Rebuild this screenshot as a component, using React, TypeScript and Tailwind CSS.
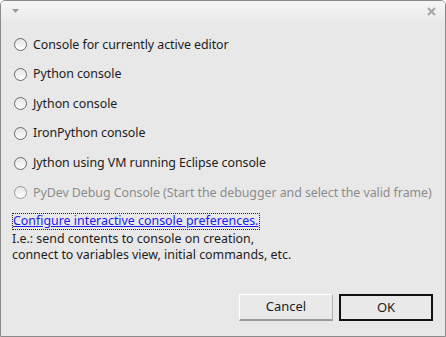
import { useState } from "react";

const options = [
  { label: "Console for currently active editor", disabled: false },
  { label: "Python console", disabled: false },
  { label: "Jython console", disabled: false },
  { label: "IronPython console", disabled: false },
  { label: "Jython using VM running Eclipse console", disabled: false },
  { label: "PyDev Debug Console (Start the debugger and select the valid frame)", disabled: true },
];

function Radio({ disabled }: { disabled: boolean }) {
  return (
    <span
      className={
        "inline-block shrink-0 w-[13px] h-[13px] rounded-full border bg-gradient-to-b from-[#e4e4e4] to-white " +
        (disabled ? "border-[#9a9a9a]" : "border-[#6a6a6a]")
      }
    />
  );
}

export default function App() {
  const [selected, setSelected] = useState<number | null>(null);

  return (
    <div className="w-[446px] h-[337px] flex flex-col bg-[#e8e8e8] border border-[#8a8a8a] rounded-t-[5px] overflow-hidden text-[12.4px] text-[#1c1c1c] font-['Noto_Sans',sans-serif]">
      {/* Title bar */}
      <div className="h-[21px] shrink-0 flex items-center justify-between pl-[11px] pr-[9px] bg-gradient-to-b from-[#f5f5f5] to-[#ebebeb]">
        <svg width="7" height="5" viewBox="0 0 7 5">
          <path d="M0 0 H7 L3.5 4 Z" fill="#9a9a9a" />
        </svg>
        <svg width="9" height="9" viewBox="0 0 9 9">
          <path d="M1 1 L8 8 M8 1 L1 8" stroke="#a8a8a8" strokeWidth="2.2" />
        </svg>
      </div>

      <div className="flex-1 flex flex-col pl-[11px] pt-[8px]">
        {options.map((o, i) => (
          <div
            key={o.label}
            onClick={() => !o.disabled && setSelected(i)}
            className={"h-[29.6px] pl-[2px] flex items-center gap-[6px] whitespace-nowrap " + (o.disabled ? "text-[#8c8c8c]" : "")}
          >
            <Radio disabled={o.disabled} />
            <span className={"leading-none tracking-[-0.05px] " + (selected === i ? "" : "")}>{o.label}</span>
          </div>
        ))}

        <div className="mt-[5px] flex">
          <a className="h-[17px] flex items-center pr-[1px] border border-dotted border-[#222] text-[#1b1bf0] underline leading-none">
            Configure interactive console preferences.
          </a>
        </div>
        <p className="leading-[16px] mt-[1px]">
          I.e.: send contents to console on creation,
          <br />
          connect to variables view, initial commands, etc.
        </p>

        <div className="mt-auto mb-[15px] mr-[12px] flex justify-end gap-[6px] text-[13px]">
          <button className="w-[94px] h-[27px] bg-[#e9e9e9] border-t border-l border-white border-b-2 border-r border-b-[#9a9a9a] border-r-[#b0b0b0]">
            Cancel
          </button>
          <button className="w-[94px] h-[27px] bg-[#e9e9e9] border-2 border-[#111]">
            OK
          </button>
        </div>
      </div>
    </div>
  );
}
